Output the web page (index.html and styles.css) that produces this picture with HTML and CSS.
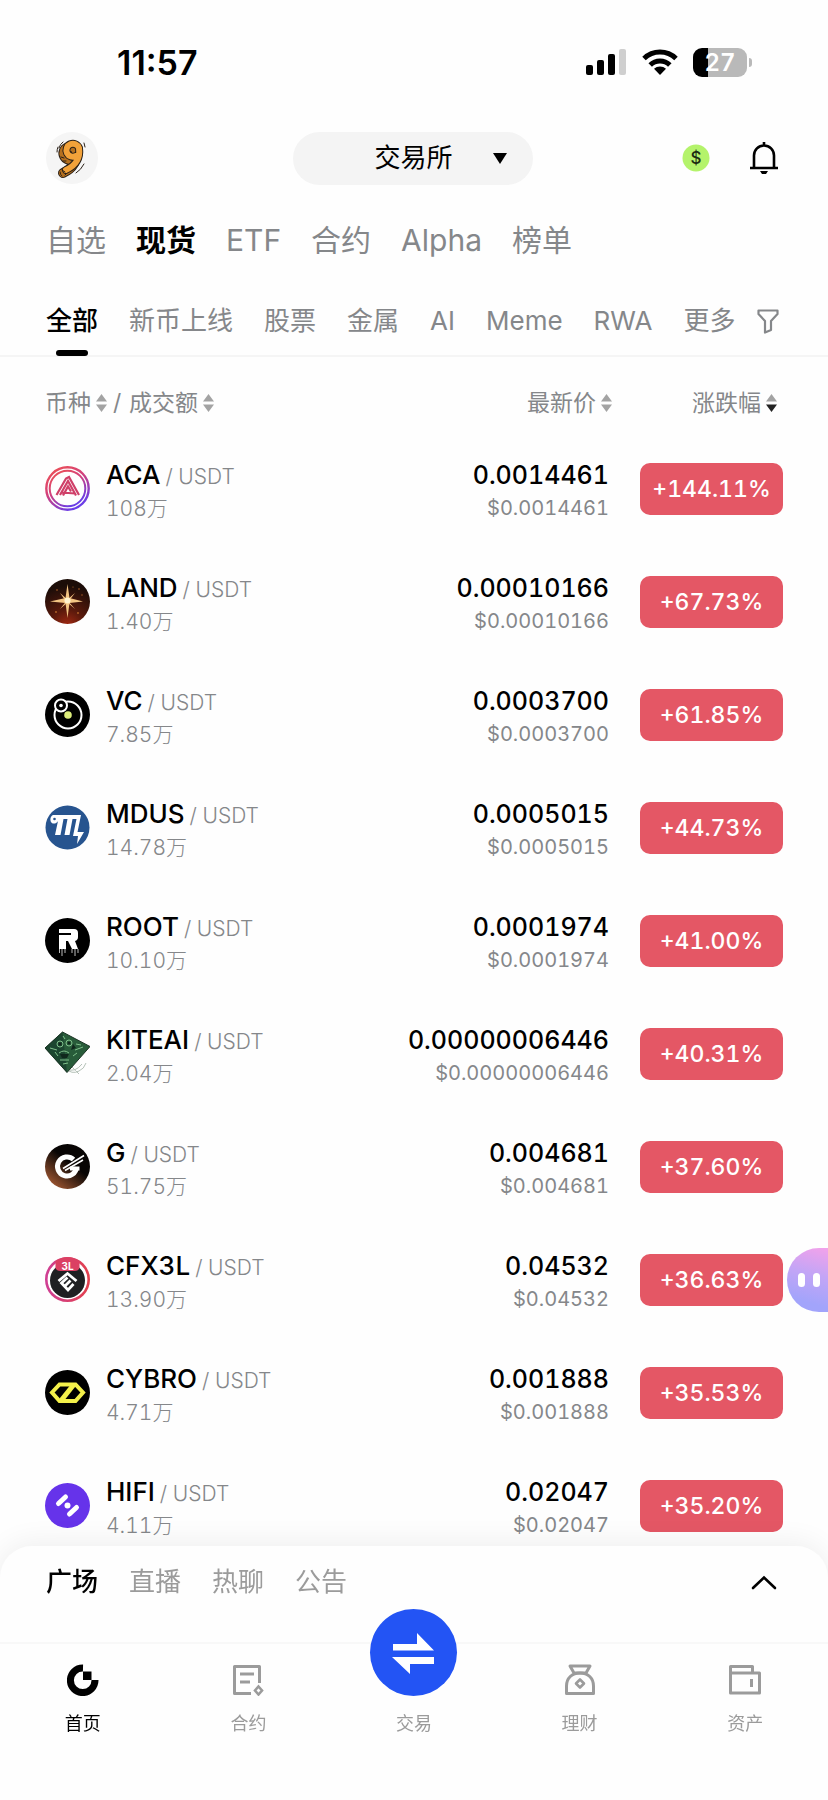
FILE: index.html
```html
<!DOCTYPE html>
<html lang="zh-CN">
<head>
<meta charset="utf-8">
<meta name="viewport" content="width=device-width, initial-scale=1">
<title>交易所</title>
<link rel="stylesheet" href="styles.css">
</head>
<body>
<div class="status">
  <time class="clock">11:57</time>
  <div class="status-icons">
    <svg width="41" height="28" viewBox="0 0 41 28" aria-hidden="true"><rect x="0" y="17" width="7" height="10" rx="2"/><rect x="11" y="12" width="7" height="15" rx="2"/><rect x="22" y="6" width="7" height="21" rx="2"/><rect x="33" y="1" width="7" height="26" rx="2" fill="#cfcfcf"/></svg>
    <svg width="36" height="28" viewBox="0 0 36 28" aria-hidden="true"><g fill="none" stroke="#000" stroke-width="5"><path d="M2 10.500a23 23 0 0 1 32 0"/><path d="M8.200 17a14 14 0 0 1 19.600 0"/></g><path d="M18 27l-6-6.200a9 9 0 0 1 12 0z"/></svg>
    <div class="battery"><span>27</span></div>
  </div>
</div>

<header class="topbar">
  <button class="avatar" aria-label="个人中心">
    <svg width="52" height="52" viewBox="0 0 52 52" aria-hidden="true">
      <g fill="none" stroke-linecap="round">
        <path d="M29 25a6.500 6.500 0 1 1 3-8q2 15-13 22" stroke="#2b2118" stroke-width="10" transform="translate(-2 2)"/>
        <path d="M29 25a6.500 6.500 0 1 1 3-8q2 15-13 22" stroke="#b5701f" stroke-width="8" transform="translate(-2 2)"/>
        <path d="M29 25a6.500 6.500 0 1 1 3-8q2 15-13 22" stroke="#2b2118" stroke-width="8" transform="translate(1 -1)"/>
        <path d="M29 25a6.500 6.500 0 1 1 3-8q2 15-13 22" stroke="#f2a23a" stroke-width="6" transform="translate(1 -1)"/>
        <path d="M13 16q1-4 4-6M11 20q0-3 1-5M38 32q-3 6-8 9M38 11l1 4M14 40q0 3 2 4M15 25l3 1M17 29l3 0M16 38l3 2M19 43l2-2" stroke="#2b2118" stroke-width="1"/>
      </g>
    </svg>
  </button>
  <button class="switcher"><span>交易所</span><svg width="14" height="11" viewBox="0 0 14 11" aria-hidden="true"><path d="M0 0h14L7 11z"/></svg></button>
  <div class="actions">
    <button class="icon-btn" aria-label="奖励"><svg width="28" height="28" viewBox="0 0 28 28"><circle cx="14" cy="14" r="13.500" fill="#b4f36b"/><text x="14" y="20" text-anchor="middle" font-family="Inter, sans-serif" font-size="17" font-weight="500" fill="#1c2b12">$</text></svg></button>
    <button class="icon-btn" aria-label="通知"><svg width="30" height="34" viewBox="0 0 30 34"><path d="M1 27h28M5 27V14.500a10 10 0 0 1 20 0V27M15 1v4" fill="none" stroke="#000" stroke-width="2.600"/><path d="M11 30h8l-2 3h-4z"/></svg></button>
  </div>
</header>

<nav class="markets" aria-label="市场">
  <a href="#fav">自选</a><a href="#spot" class="on">现货</a><a href="#etf">ETF</a><a href="#futures">合约</a><a href="#alpha">Alpha</a><a href="#rank">榜单</a>
</nav>

<nav class="filters" aria-label="分类">
  <a href="#all" class="on">全部</a><a href="#new">新币上线</a><a href="#stock">股票</a><a href="#metal">金属</a><a href="#ai">AI</a><a href="#meme">Meme</a><a href="#rwa">RWA</a><a href="#more">更多</a>
  <button class="funnel" aria-label="筛选"><svg width="22" height="25" viewBox="0 0 22 25"><path d="M1.500 1.500h19v3.500l-6.500 7v9l-6 2.500V12L1.500 5z" fill="none" stroke="#85878a" stroke-width="2.200" stroke-linejoin="round"/></svg></button>
</nav>

<svg width="0" height="0" class="defs" aria-hidden="true">
  <symbol id="sort" viewBox="0 0 11 18"><path d="M5.500 0L11 7.500H0z"/><path class="down" d="M0 10.500h11L5.500 18z"/></symbol>
</svg>

<main>
<table class="coins">
  <thead>
    <tr>
      <th scope="col" class="c-pair"><div class="heads"><button>币种<svg class="sort"><use href="#sort"/></svg></button><i>/</i><button>成交额<svg class="sort"><use href="#sort"/></svg></button></div></th>
      <th scope="col" class="c-price"><button>最新价<svg class="sort"><use href="#sort"/></svg></button></th>
      <th scope="col" class="c-change"><button>涨跌幅<svg class="sort" viewBox="0 0 11 18"><path d="M5.500 0L11 7.500H0z"/><path fill="#222" d="M0 10.500h11L5.500 18z"/></svg></button></th>
    </tr>
  </thead>
  <tbody>
    <tr>
      <td><div class="pair"><svg class="logo" viewBox="0 0 45 45"><defs><linearGradient id="aca" x1="0" y1="0" x2=".6" y2="1"><stop offset="0" stop-color="#f0524f"/><stop offset=".5" stop-color="#d2407c"/><stop offset="1" stop-color="#6a3de8"/></linearGradient></defs><g fill="none" stroke="url(#aca)"><circle cx="22.500" cy="22.500" r="21.200" stroke-width="2.400"/><circle cx="22.500" cy="22.500" r="17.800" stroke-width="2"/><g stroke="#cf3f68" stroke-width="2.200"><path d="M11.500 29L21 12.500l3-1.500 10 18"/><path d="M15 29l8-14 8 14.500M18 29.500l5-9 3 5M17 26.500l13 1"/></g></g></svg>
        <div><div class="name"><b>ACA</b><span>/ USDT</span></div><div class="sub">108万</div></div></div></td>
      <td class="num"><div class="price">0.0014461</div><div class="sub">$0.0014461</div></td>
      <td class="chg"><button class="badge">+144.11%</button></td>
    </tr>
    <tr>
      <td><div class="pair"><svg class="logo" viewBox="0 0 45 45"><defs><radialGradient id="land" cx=".5" cy="1.050" r=".9"><stop offset="0" stop-color="#a52a12"/><stop offset=".4" stop-color="#5c1a0c"/><stop offset="1" stop-color="#1c0d08"/></radialGradient></defs><circle cx="22.500" cy="22.500" r="22.500" fill="url(#land)"/><g fill="#f3c583"><path d="M22.500 5l2 14 13.500 3.500L24.500 24l-2 15-2-15L5 22.500 20.500 19z"/><path d="M15 14l7.500 6.500L30 14l-6.500 8.500L30 30l-7.500-6.500L15 30l6-7.500z"/></g><circle cx="22.500" cy="21.500" r="3" fill="#fff3cf"/><g fill="#b8682b"><circle cx="12" cy="11" r=".8"/><circle cx="34" cy="10" r=".8"/><circle cx="37" cy="16" r=".7"/><circle cx="11" cy="33" r=".9"/><circle cx="33" cy="34" r=".9"/><circle cx="28" cy="8" r=".6"/></g></svg>
        <div><div class="name"><b>LAND</b><span>/ USDT</span></div><div class="sub">1.40万</div></div></div></td>
      <td class="num"><div class="price">0.00010166</div><div class="sub">$0.00010166</div></td>
      <td class="chg"><button class="badge">+67.73%</button></td>
    </tr>
    <tr>
      <td><div class="pair"><svg class="logo" viewBox="0 0 45 45"><circle cx="22.500" cy="22.500" r="22.500"/><g fill="#000" stroke="#fff" stroke-width="2"><circle cx="23" cy="23" r="13.500"/><circle cx="16" cy="13.500" r="6"/></g><circle cx="23" cy="23" r="3.800" fill="#dcec7a"/><circle cx="16" cy="13.500" r="1.800" fill="#fff"/></svg>
        <div><div class="name"><b>VC</b><span>/ USDT</span></div><div class="sub">7.85万</div></div></div></td>
      <td class="num"><div class="price">0.0003700</div><div class="sub">$0.0003700</div></td>
      <td class="chg"><button class="badge">+61.85%</button></td>
    </tr>
    <tr>
      <td><div class="pair"><svg class="logo" viewBox="0 0 45 45"><circle cx="22.500" cy="22.500" r="22" fill="#27548f"/><path d="M9 10h27l-3.500 17H39l-7 12 1-8h-5l3.500-17h-4L24.500 30h-5l3-16h-4L15.500 30h-5.500l3-14c-1 3-7 4-7.500-.500C5 12 7 10 9 10z" fill="#fff"/><circle cx="9.500" cy="14" r="1.300" fill="#27548f"/></svg>
        <div><div class="name"><b>MDUS</b><span>/ USDT</span></div><div class="sub">14.78万</div></div></div></td>
      <td class="num"><div class="price">0.0005015</div><div class="sub">$0.0005015</div></td>
      <td class="chg"><button class="badge">+44.73%</button></td>
    </tr>
    <tr>
      <td><div class="pair"><svg class="logo" viewBox="0 0 45 45"><circle cx="22.500" cy="22.500" r="22.500"/><path d="M14 11h15q4 0 4 4v4q0 3-3 4l3 8h-6l-4-8h-2v8h-7V17h12v-2H14z" fill="#fff"/><g stroke="#bbb" stroke-width="1"><path d="M14.500 31v4M17 31v7M20 31v4M27 31v4M30 31v7M33 31v4"/></g></svg>
        <div><div class="name"><b>ROOT</b><span>/ USDT</span></div><div class="sub">10.10万</div></div></div></td>
      <td class="num"><div class="price">0.0001974</div><div class="sub">$0.0001974</div></td>
      <td class="chg"><button class="badge">+41.00%</button></td>
    </tr>
    <tr>
      <td><div class="pair"><svg class="logo" viewBox="0 0 45 45"><path d="M20 37q7 7 14 3 5-2 7-8M22 38q8 4 15-5M25 34q6 6 9 9" fill="none" stroke="#b5c2b8" stroke-width="1"/><path d="M17.500 1L45 15.500 22 41.500 0 17z" fill="#285c3a"/><path d="M17.500 1L22 41.500 0 17z" fill="#1c4630"/><g fill="none" stroke="#7fc08a" stroke-width="1"><circle cx="15" cy="13" r="3"/><circle cx="24" cy="12" r="3"/><path d="M14 22q5-4 10 0M15 29h9M5 17l7 2M30 19l8-3M28 25l4-3M18 33l5-1M10 21l3 4M18 5l2 3M31 13l5 1"/></g><g fill="#10281c"><circle cx="15" cy="13" r="1.500"/><circle cx="24" cy="12" r="1.500"/><path d="M15 23h9l-2 4h-5zM28 13l3 4-5 2z"/></g><path d="M17.500 1L45 15.500 22 41.500 0 17z" fill="none" stroke="#1b3324" stroke-width="1"/></svg>
        <div><div class="name"><b>KITEAI</b><span>/ USDT</span></div><div class="sub">2.04万</div></div></div></td>
      <td class="num"><div class="price">0.00000006446</div><div class="sub">$0.00000006446</div></td>
      <td class="chg"><button class="badge">+40.31%</button></td>
    </tr>
    <tr>
      <td><div class="pair"><svg class="logo" viewBox="0 0 45 45"><defs><linearGradient id="gg" x1=".9" y1=".1" x2=".2" y2="1"><stop offset=".4" stop-color="#080504"/><stop offset="1" stop-color="#a65a33"/></linearGradient></defs><circle cx="22.500" cy="22.500" r="22.500" fill="url(#gg)"/><path d="M28.500 15.500A9.500 9.500 0 1 0 31.500 23" fill="none" stroke="#fff" stroke-width="5"/><path d="M18 24.500L39 11.500M20 26.500L38 16" stroke="#fff" stroke-width="1.600"/><path d="M25 22.500h9.500v4h-9.500z" fill="#fff"/></svg>
        <div><div class="name"><b>G</b><span>/ USDT</span></div><div class="sub">51.75万</div></div></div></td>
      <td class="num"><div class="price">0.004681</div><div class="sub">$0.004681</div></td>
      <td class="chg"><button class="badge">+37.60%</button></td>
    </tr>
    <tr>
      <td><div class="pair"><svg class="logo" viewBox="0 0 45 45"><defs><linearGradient id="cfx" x1="0" y1="0" x2="1" y2="0"><stop offset="0" stop-color="#cf3f93"/><stop offset="1" stop-color="#e2404d"/></linearGradient></defs><circle cx="22.500" cy="22.500" r="21.200" fill="#fff" stroke="url(#cfx)" stroke-width="2.600"/><circle cx="22.500" cy="23.500" r="17.500" fill="#1f2022"/><path d="M10.500 4Q22.500-4 34.500 4v7q-1 3-5 3h-14q-4 0-5-3z" fill="#db4063"/><text x="22.500" y="12.500" text-anchor="middle" font-family="Inter, sans-serif" font-size="10" font-weight="700" fill="#fff">3L</text><g fill="none" stroke="#fff" stroke-width="2.800"><path d="M13.500 24L22.500 16.500 31.500 24"/><path d="M22.500 20.500L16.500 26l6.500 7 5.500-6M20 29l5.500-5.500"/></g></svg>
        <div><div class="name"><b>CFX3L</b><span>/ USDT</span></div><div class="sub">13.90万</div></div></div></td>
      <td class="num"><div class="price">0.04532</div><div class="sub">$0.04532</div></td>
      <td class="chg"><button class="badge">+36.63%</button></td>
    </tr>
    <tr>
      <td><div class="pair"><svg class="logo" viewBox="0 0 45 45"><circle cx="22.500" cy="22.500" r="22.500"/><path d="M14.500 14.500h16L38 22.500l-7.500 8.500h-16L7 22.500z" fill="none" stroke="#f3f04a" stroke-width="4"/><path d="M16.500 30L28.500 15" stroke="#f3f04a" stroke-width="5"/></svg>
        <div><div class="name"><b>CYBRO</b><span>/ USDT</span></div><div class="sub">4.71万</div></div></div></td>
      <td class="num"><div class="price">0.001888</div><div class="sub">$0.001888</div></td>
      <td class="chg"><button class="badge">+35.53%</button></td>
    </tr>
    <tr>
      <td><div class="pair"><svg class="logo" viewBox="0 0 45 45"><circle cx="22.500" cy="22.500" r="22.500" fill="#6633ea"/><g stroke="#fff" stroke-width="5" stroke-linecap="round"><path d="M13.500 20.500l7-6.500M24.500 31l7-6.500"/></g><circle cx="22.500" cy="22.500" r="3" fill="#fff"/></svg>
        <div><div class="name"><b>HIFI</b><span>/ USDT</span></div><div class="sub">4.11万</div></div></div></td>
      <td class="num"><div class="price">0.02047</div><div class="sub">$0.02047</div></td>
      <td class="chg"><button class="badge">+35.20%</button></td>
    </tr>
  </tbody>
</table>
</main>

<button class="helper" aria-label="助手"><i></i><i></i></button>

<footer class="dock">
  <nav class="feed" aria-label="动态">
    <a href="#square" class="on">广场</a><a href="#live">直播</a><a href="#chat">热聊</a><a href="#news">公告</a>
    <button class="expand" aria-label="展开"><svg width="26" height="15" viewBox="0 0 26 15"><path d="M2 13L13 2.500 24 13" fill="none" stroke="#000" stroke-width="2.600" stroke-linecap="round"/></svg></button>
  </nav>
  <nav class="tabs" aria-label="主导航">
    <a href="#home" class="on"><svg width="32" height="32" viewBox="0 0 32 32"><path d="M16 4A12.300 12.300 0 1 0 28 16" fill="none" stroke="#000" stroke-width="7"/><path d="M16 7.500h8.500V16H16z"/></svg>首页</a>
    <a href="#contract"><svg width="32" height="32" viewBox="0 0 32 32"><g fill="none" stroke="#9b9b9b" stroke-width="3"><path d="M27.500 19V2.500h-25v27H19" stroke-linejoin="round"/><path d="M8 10h14M8 18h10"/><path d="M26.500 22.500l3.500 4-3.500 4-3.500-4z" stroke-width="2.600"/></g></svg>合约</a>
    <a href="#trade"><span class="trade"><svg width="54" height="44" viewBox="0 0 54 44" fill="#fff"><path d="M6 13h24V2l17 17.500H6zM47 33H23v10L5 26h42z"/></svg></span>交易</a>
    <a href="#earn"><svg width="32" height="32" viewBox="0 0 32 32"><g fill="none" stroke="#9b9b9b" stroke-width="3" stroke-linejoin="round"><path d="M6 2h20l-4 7H10z"/><path d="M2.500 29.500V22C2.500 14 8 9 16 9s13.500 5 13.500 13v7.500z"/><path d="M16 15.500l4 4-4 4-4-4z" stroke-width="2.600"/></g></svg>理财</a>
    <a href="#assets"><svg width="32" height="32" viewBox="0 0 32 32"><g fill="none" stroke="#9b9b9b" stroke-width="3" stroke-linejoin="round"><path d="M1.500 9h29v20h-29V2.500h22V9"/><path d="M22.500 15v8" stroke-width="3"/></g></svg>资产</a>
  </nav>
</footer>
</body>
</html>
```
FILE: styles.css
```css
* { box-sizing: border-box; }
body {
  margin: 0;
  padding-bottom: 236px;
  background: #fefefe;
  color: #000;
  font-family: Inter, "Noto Sans CJK SC", sans-serif;
  font-feature-settings: "tnum" 1;
}
button { border: 0; padding: 0; margin: 0; background: none; color: inherit; font: inherit; cursor: pointer; }
a { color: inherit; text-decoration: none; }
i { font-style: normal; }
svg { display: block; flex: none; }
.defs { position: absolute; }

.status { display: flex; justify-content: space-between; align-items: center; height: 124px; padding: 0 81px 0 117px; }
.clock { font-size: 34px; font-weight: 600; font-feature-settings: "tnum" 0; }
.status-icons { display: flex; align-items: center; gap: 15px; }
.battery {
  position: relative;
  width: 54px; height: 29px;
  border-radius: 9px;
  background: linear-gradient(90deg, #000 15px, #b9b9b9 15px);
  color: #fff;
  font-size: 24px; font-weight: 600; line-height: 29px; text-align: center;
}
.battery::after { content: ""; position: absolute; right: -5px; top: 10px; width: 3px; height: 9px; border-radius: 0 3px 3px 0; background: #b9b9b9; }

.topbar { display: grid; grid-template-columns: 1fr 240px 1fr; align-items: center; height: 68px; padding: 0 49px 0 46px; }
.avatar { width: 52px; height: 52px; border-radius: 50%; background: #f5f5f5; }
.switcher { display: flex; align-items: center; justify-content: flex-end; gap: 40px; height: 53px; padding-right: 26px; border-radius: 27px; background: #f4f4f4; font-size: 26px; line-height: 52px; }
.actions { display: flex; justify-content: flex-end; align-items: center; gap: 39px; }

.markets { display: flex; gap: 30px; height: 98px; padding: 0 46px; color: #85878a; font-size: 30px; font-weight: 400; line-height: 96px; }
.markets .on { color: #000; font-weight: 600; }

.filters { display: flex; gap: 31px; height: 67px; padding: 0 46px; border-bottom: 2px solid #f5f5f5; color: #85878a; font-size: 26px; line-height: 62px; white-space: nowrap; }
.filters a { position: relative; height: 67px; }
.filters .on { color: #000; font-weight: 500; }
.filters .on::after { content: ""; position: absolute; left: 10px; right: 10px; bottom: 1px; height: 6px; border-radius: 3px; background: #000; }
.funnel { height: 62px; margin-left: -9px; }

.coins { width: 100%; border-collapse: collapse; }
.coins th { height: 75px; padding: 17px 0 0; color: #85878a; font-size: 23px; font-weight: 400; line-height: 30px; text-align: right; }
.coins th button { display: inline-flex; align-items: center; gap: 5px; }
.heads { display: flex; align-items: center; gap: 6px; }
.heads i { width: 10px; }
.sort { width: 11px; height: 18px; fill: #a3a3a3; }
.coins th.c-pair { padding-left: 45px; text-align: left; }
.coins th.c-change { width: 216px; padding-right: 51px; }
.coins td { height: 113px; padding: 0; }
.coins td:first-child { padding-left: 45px; }
.coins td.chg { padding-right: 45px; text-align: right; }
.coins td.num { padding: 5px 3px 0 0; text-align: right; }
.pair { display: flex; align-items: center; gap: 16px; }
.pair > div { padding-top: 5px; }
.logo { width: 45px; height: 45px; }
.name { display: flex; align-items: baseline; gap: 5px; line-height: 33px; }
.name b { font-size: 26px; font-weight: 500; }
.name span { color: #85878a; font-size: 21px; font-weight: 300; }
.price { font-size: 25px; font-weight: 500; line-height: 34px; }
.sub { color: #85878a; font-size: 20px; font-weight: 400; line-height: 32px; }
.pair .sub { font-size: 21px; font-weight: 300; }
.badge { width: 143px; height: 52px; border-radius: 10px; background: #e45765; color: #fff; font-size: 23px; font-weight: 500; }

.helper {
  position: fixed; right: 0; bottom: 488px;
  display: flex; align-items: center; gap: 8px;
  width: 41px; height: 64px; padding-left: 11px;
  border-radius: 32px 0 0 32px;
  background: linear-gradient(195deg, #f3a2ea, #c3a5f6 40%, #a2a4fb 80%);
}
.helper i { width: 7px; height: 14px; border-radius: 4px; background: #fff; }

.dock { position: fixed; left: 0; right: 0; bottom: 0; border-radius: 32px 32px 0 0; background: #fefefe; box-shadow: 0 -2px 30px rgba(0, 0, 0, 0.07); }
.feed { display: flex; align-items: center; gap: 31px; height: 98px; padding: 0 51px 24px 46px; border-bottom: 2px solid #f8f8f8; color: #9b9b9b; font-size: 26px; line-height: 36px; }
.feed .on { color: #000; font-weight: 500; }
.expand { margin-left: auto; }
.tabs { display: grid; grid-template-columns: repeat(5, 1fr); height: 156px; padding-top: 18px; color: #9b9b9b; font-size: 18px; line-height: 26px; }
.tabs a { display: flex; flex-direction: column; align-items: center; gap: 15px; height: 75px; justify-content: flex-end; }
.tabs .on { color: #000; }
.trade { display: flex; flex: none; align-items: center; justify-content: center; width: 87px; height: 87px; border-radius: 50%; background: #2354f4; }
```
